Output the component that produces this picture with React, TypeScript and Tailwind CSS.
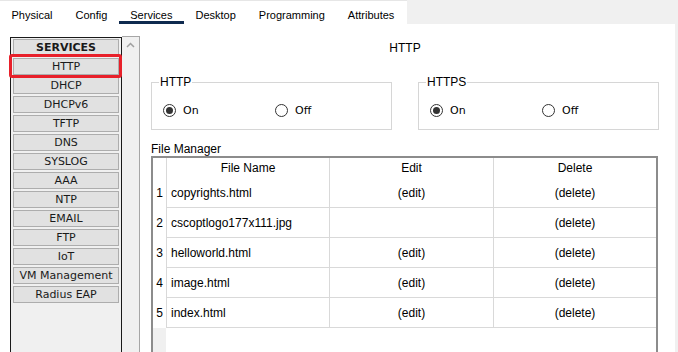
import React from "react";

const tabs = ["Physical", "Config", "Services", "Desktop", "Programming", "Attributes"];
const services = ["HTTP", "DHCP", "DHCPv6", "TFTP", "DNS", "SYSLOG", "AAA", "NTP", "EMAIL", "FTP", "IoT", "VM Management", "Radius EAP"];
const files = [
  { n: 1, name: "copyrights.html", edit: true },
  { n: 2, name: "cscoptlogo177x111.jpg", edit: false },
  { n: 3, name: "helloworld.html", edit: true },
  { n: 4, name: "image.html", edit: true },
  { n: 5, name: "index.html", edit: true },
];

function Radio({ checked, label }: { checked: boolean; label: string }) {
  return (
    <div className="flex items-center gap-[7px]">
      <div className="w-[13px] h-[13px] rounded-full border border-[#333333] bg-white flex items-center justify-center">
        {checked && <div className="w-[7px] h-[7px] rounded-full bg-[#333333]" />}
      </div>
      <span className="text-[11px] leading-[14px] text-black" style={{ fontFamily: '"DejaVu Sans", sans-serif' }}>{label}</span>
    </div>
  );
}

function Group({ title }: { title: string }) {
  return (
    <div className="relative w-[241px] h-[48px] border border-[#d6d6d6]">
      <span className="absolute -top-[8px] left-[7px] bg-white px-[1px] text-[12px] leading-[14px]">{title}</span>
      <div className="flex items-center h-full pt-[9px] pl-[11px]">
        <div className="w-[112px]"><Radio checked label="On" /></div>
        <Radio checked={false} label="Off" />
      </div>
    </div>
  );
}

export default function App() {
  return (
    <div className="w-[678px] h-[352px] overflow-hidden bg-white flex flex-col relative text-black" style={{ fontFamily: '"Liberation Sans", Arial, sans-serif' }}>
      {/* Tab bar */}
      <div className="h-[24px] bg-[#f0f0f0] flex shrink-0">
        <div className="flex bg-white h-full pr-[1px] border-t border-[#e6e6e6]">
          {tabs.map((t) => (
            <div key={t} className="relative h-full px-[11.5px] flex items-center text-[11px] leading-[14px] pt-[4px]">
              {t}
              {t === "Services" && <div className="absolute left-0 right-0 bottom-0 h-[3px] bg-[#0f2a4f]" />}
            </div>
          ))}
        </div>
      </div>
      {/* Body */}
      <div className="flex-1 flex min-h-0">
        <div className="w-[10px] shrink-0" />
        {/* Services panel */}
        <div className="relative w-[112px] shrink-0 mt-[13px] border-l border-t border-r border-[#1a1a1a] bg-[#f0f0f0] flex flex-col gap-[2px] px-[2px] pt-[1px] text-[#1a1a1a]" style={{ fontFamily: '"DejaVu Sans", Verdana, sans-serif' }}>
          <div className="h-[17px] bg-[#e1e1e1] border border-[#adadad] flex items-center justify-center text-[11px] font-bold leading-none">SERVICES</div>
          {services.map((s) => (
            <div key={s} className="h-[17px] bg-[#e1e1e1] border border-[#adadad] flex items-center justify-center text-[11px] leading-none">{s}</div>
          ))}
          <div className="absolute left-[-2px] top-[16px] w-[113px] h-[24px] border-[3px] border-[#e8202a] rounded-[3px]" />
        </div>
        {/* Scrollbar */}
        <div className="w-[18px] shrink-0 mt-[12px] bg-[#f0f0f0] border-t border-r border-[#a6a6a6] flex justify-center pt-[5px]">
          <svg width="9" height="6" viewBox="0 0 9 6"><path d="M1 5 L4.5 1.5 L8 5" stroke="#a0a0a0" strokeWidth="1.5" fill="none" /></svg>
        </div>
        {/* Main */}
        <div className="flex-1 flex flex-col min-w-0 pl-[11px] pr-[16px]">
          <div className="text-center text-[12px] leading-[14px] mt-[17px]">HTTP</div>
          <div className="flex justify-between mt-[27px]">
            <Group title="HTTP" />
            <Group title="HTTPS" />
          </div>
          <div className="text-[12px] leading-[14px] mt-[12px]">File Manager</div>
          <div className="flex-1 w-[507px] border-t-2 border-l-2 border-r-2 border-[#8c8c8c] flex flex-col text-[12px]">
            <div className="flex h-[20px]">
              <div className="w-[13px] bg-white" />
              <div className="w-[163px] border-l border-[#d9d9d9] flex items-center justify-center">File Name</div>
              <div className="w-[164px] border-l border-[#d9d9d9] flex items-center justify-center">Edit</div>
              <div className="flex-1 border-l border-[#d9d9d9] flex items-center justify-center">Delete</div>
            </div>
            {files.map((f) => (
              <div key={f.n} className="flex h-[30px]">
                <div className="w-[13px] bg-white flex items-center justify-center">{f.n}</div>
                <div className="w-[163px] border-l border-b border-[#d9d9d9] flex items-center pl-[4px]">{f.name}</div>
                <div className="w-[164px] border-l border-b border-[#d9d9d9] flex items-center justify-center">{f.edit ? "(edit)" : ""}</div>
                <div className="flex-1 border-l border-b border-[#d9d9d9] flex items-center justify-center">(delete)</div>
              </div>
            ))}
            <div className="flex-1 flex">
              <div className="w-[13px] bg-[#f0f0f0]" />
              <div className="flex-1 bg-white" />
            </div>
          </div>
        </div>
        <div className="w-[3px] shrink-0 bg-[#f0f0f0]" />
      </div>
    </div>
  );
}
